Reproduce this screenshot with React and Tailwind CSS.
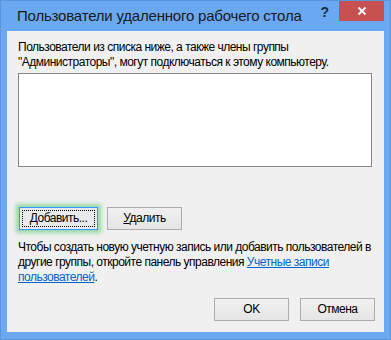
export default function App() {
  const font = { fontFamily: '"Liberation Sans", Arial, sans-serif' };
  return (
    <div className="w-[391px] h-[340px] bg-[#6aa9f1] border border-[#5c95d8] flex flex-col overflow-hidden" style={font}>
      <div className="h-[30px] flex items-start shrink-0">
        <div className="pl-[16px] pt-[5px] text-[15px] leading-[20px] tracking-[-0.2px] text-[#1a1a1a] flex-1 whitespace-nowrap">
          Пользователи удаленного рабочего стола
        </div>
        <div className="pt-[3px] pr-[10px] text-[14px] font-bold text-[#1a2a3a] leading-[16px]">?</div>
        <div className="w-[45px] h-[20px] bg-[#c75050] flex items-center justify-center mr-[6px]">
          <svg width="10" height="10" viewBox="0 0 10 10">
            <path d="M1.5 1.5 L8.5 8.5 M8.5 1.5 L1.5 8.5" stroke="white" strokeWidth="1.8" />
          </svg>
        </div>
      </div>
      <div className="ml-[6px] mr-[6px] h-[301px] bg-[#f0f0f0] flex flex-col text-[12px] leading-[15px] tracking-[-0.5px] text-black whitespace-nowrap">
        <div className="pl-[11px] pr-[10px] pt-[9px]">
          Пользователи из списка ниже, а также члены группы<br />
          "Администраторы", могут подключаться к этому компьютеру.
        </div>
        <div className="ml-[11px] mt-[3px] w-[354px] h-[94px] bg-white border border-[#828790]"></div>
        <div className="flex pl-[12px] mt-[40px] gap-[9px]">
          <div className="w-[79px] h-[23px] border border-[#3399ff] bg-[#e8eaec] shadow-[0_0_4px_3px_rgba(90,200,120,0.6)] p-[2px] flex">
            <div className="flex-1 border border-dotted border-black flex items-center justify-center">
              <span><span className="underline">Д</span>обавить...</span>
            </div>
          </div>
          <div className="w-[75px] h-[23px] border border-[#acacac] bg-gradient-to-b from-[#f0f0f0] to-[#e5e5e5] flex items-center justify-center">
            <span><span className="underline">У</span>далить</span>
          </div>
        </div>
        <div className="pl-[11px] pr-[10px] mt-[10px]">
          Чтобы создать новую учетную запись или добавить пользователей в<br />
          другие группы, откройте панель управления <span className="text-[#0066cc] underline">Учетные записи<br />пользователей</span>.
        </div>
        <div className="flex justify-end gap-[11px] pr-[9px] mt-auto mb-[11px]">
          <div className="w-[75px] h-[23px] border border-[#acacac] bg-gradient-to-b from-[#f0f0f0] to-[#e5e5e5] flex items-center justify-center">OK</div>
          <div className="w-[75px] h-[23px] border border-[#acacac] bg-gradient-to-b from-[#f0f0f0] to-[#e5e5e5] flex items-center justify-center">Отмена</div>
        </div>
      </div>
    </div>
  );
}
